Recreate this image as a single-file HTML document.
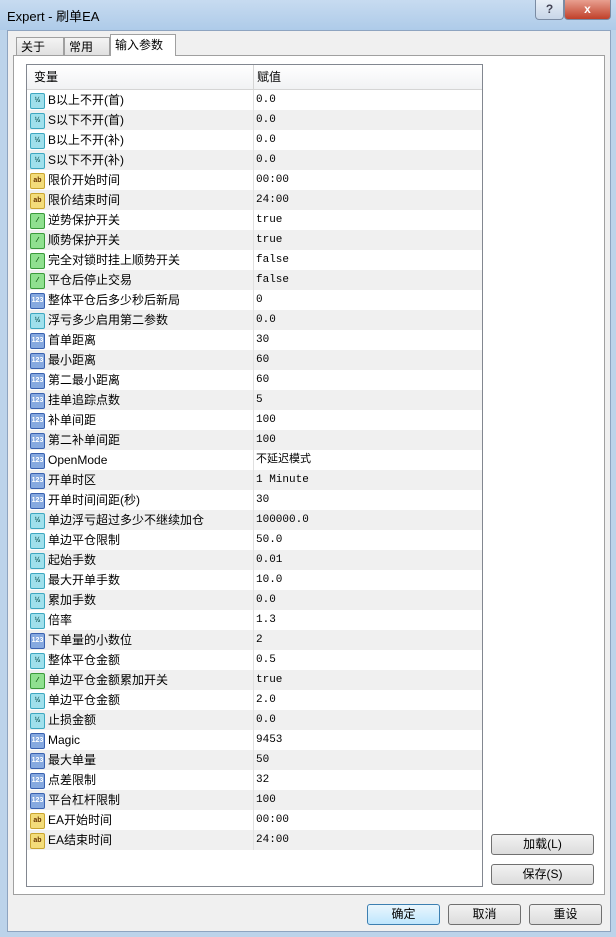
<html><head><style>
body{margin:0;width:616px;height:937px;background:#bcd3ea;font-family:"Liberation Sans","Noto Sans CJK SC",sans-serif;font-size:12px;position:relative;overflow:hidden}
.title{position:absolute;left:0;top:0;width:616px;height:30px;background:linear-gradient(#c7dbf0,#aecbe9)}
.title span{position:absolute;left:7px;top:6px;font-size:13px;color:#000}
.hb{position:absolute;top:0;height:19px;border:1px solid #7a8ba3;border-top:none;border-radius:0 0 4px 4px;line-height:18px}
.client{position:absolute;left:7px;top:30px;width:602px;height:900px;background:#f0f0f0;border:1px solid #8ea4c0}
.tab{position:absolute;top:37px;height:18px;border:1px solid #a0a0a0;border-bottom:none;background:linear-gradient(#f4f4f4,#e0e0e0);line-height:18px;padding-left:4px;font-size:12px;box-sizing:border-box}
.panel{position:absolute;left:13px;top:55px;width:590px;height:838px;background:#fff;border:1px solid #a0a0a0}
.tbl{position:absolute;left:26px;top:64px;width:455px;height:821px;border:1px solid #828790;background:#fff;overflow:hidden}
.hdr{height:25px;background:linear-gradient(#fff,#f1f2f4);border-bottom:1px solid #d5d5d5;position:relative;box-sizing:border-box}
.hdr span{position:absolute;top:0;line-height:25px}
.row{height:20px;position:relative;line-height:20px}
.row.g{background:#f0f0f0}
.row .n{position:absolute;left:21px;top:0}
.row .v{position:absolute;left:229px;top:0;font-family:"Liberation Mono","Noto Sans CJK SC",monospace;font-size:11px}
.row:after{content:"";position:absolute;left:226px;top:0;width:1px;height:20px;background:#e0e0e0}
.ic{position:absolute;left:3px;top:3px;width:13px;height:14px;border-radius:2px;font-size:7px;line-height:14px;text-align:center;font-weight:bold}
.i1{background:#9fe0ec;border:1px solid #3ea7c0;color:#155}
.i2{background:#f3dc7a;border:1px solid #c9a530;color:#630}
.i3{background:#8fe08f;border:1px solid #3a9a3a;color:#040}
.i4{background:#86a9e0;border:1px solid #3a62b0;color:#fff}
.btn{position:absolute;height:19px;border:1px solid #707070;border-radius:3px;background:linear-gradient(#f2f2f2,#dcdcdc);text-align:center;line-height:19px;font-size:12px}
</style></head><body>
<div class="title"><span>Expert - 刷单EA</span></div>
<div class="hb" style="left:535px;width:27px;background:linear-gradient(#e8eef6,#c8d6e8);text-align:center;font-weight:bold;color:#445">?</div>
<div class="hb" style="left:564px;width:45px;background:linear-gradient(#e8a090,#c0402a);text-align:center;color:#fff;font-weight:bold">x</div>
<div class="client"></div>
<div class="panel"></div>
<div class="tab" style="left:16px;width:48px">关于</div>
<div class="tab" style="left:64px;width:46px">常用</div>
<div class="tab" style="left:110px;top:34px;height:22px;width:66px;background:#fff;z-index:2;line-height:20px">输入参数</div>
<div class="tbl">
<div class="hdr"><span style="left:7px">变量</span><span style="left:230px">赋值</span><div style="position:absolute;left:226px;top:0;width:1px;height:24px;background:#d5d5d5"></div></div>
<div id="rows"></div>
</div>
<div class="btn" style="left:491px;top:834px;width:101px">加载(L)</div>
<div class="btn" style="left:491px;top:864px;width:101px">保存(S)</div>
<div class="btn" style="left:367px;top:904px;width:71px;border-color:#3c7fb1;background:linear-gradient(#eaf6fd,#bee6fd)">确定</div>
<div class="btn" style="left:448px;top:904px;width:71px">取消</div>
<div class="btn" style="left:529px;top:904px;width:71px">重设</div>
<script>
var d=[[1,"B以上不开(首)","0.0"],[1,"S以下不开(首)","0.0"],[1,"B以上不开(补)","0.0"],[1,"S以下不开(补)","0.0"],[2,"限价开始时间","00:00"],[2,"限价结束时间","24:00"],[3,"逆势保护开关","true"],[3,"顺势保护开关","true"],[3,"完全对锁时挂上顺势开关","false"],[3,"平仓后停止交易","false"],[4,"整体平仓后多少秒后新局","0"],[1,"浮亏多少启用第二参数","0.0"],[4,"首单距离","30"],[4,"最小距离","60"],[4,"第二最小距离","60"],[4,"挂单追踪点数","5"],[4,"补单间距","100"],[4,"第二补单间距","100"],[4,"OpenMode","不延迟模式"],[4,"开单时区","1 Minute"],[4,"开单时间间距(秒)","30"],[1,"单边浮亏超过多少不继续加仓","100000.0"],[1,"单边平仓限制","50.0"],[1,"起始手数","0.01"],[1,"最大开单手数","10.0"],[1,"累加手数","0.0"],[1,"倍率","1.3"],[4,"下单量的小数位","2"],[1,"整体平仓金额","0.5"],[3,"单边平仓金额累加开关","true"],[1,"单边平仓金额","2.0"],[1,"止损金额","0.0"],[4,"Magic","9453"],[4,"最大单量","50"],[4,"点差限制","32"],[4,"平台杠杆限制","100"],[2,"EA开始时间","00:00"],[2,"EA结束时间","24:00"]];
var t={1:"½",2:"ab",3:"⁄",4:"123"};var h="";
d.forEach(function(r,i){h+='<div class="row'+(i%2?' g':'')+'"><div class="ic i'+r[0]+'">'+t[r[0]]+'</div><span class="n">'+r[1]+'</span><span class="v">'+r[2]+'</span></div>';});
document.getElementById("rows").innerHTML=h;
</script>
</body></html>
